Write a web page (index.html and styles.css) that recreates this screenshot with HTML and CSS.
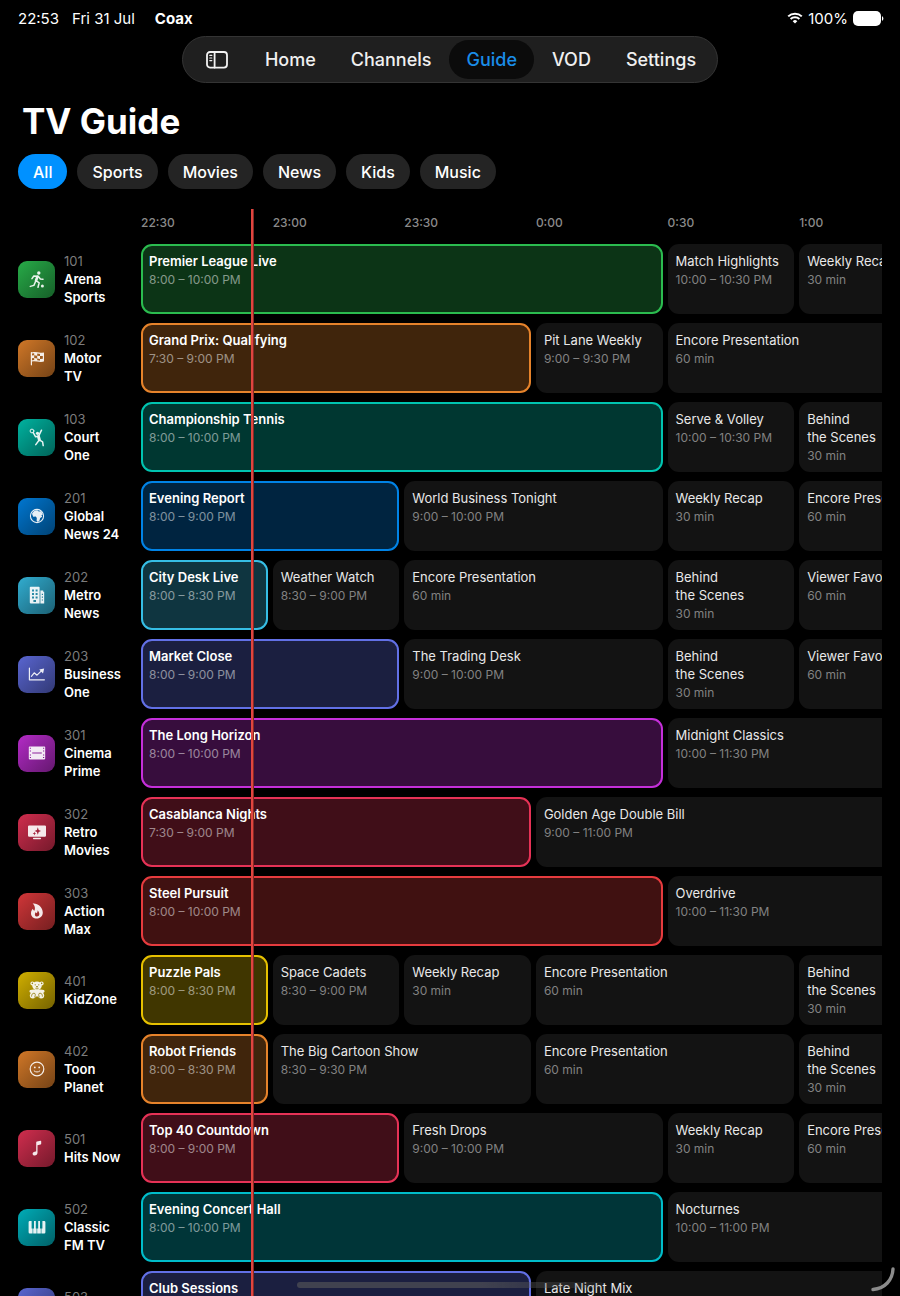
FILE: index.html
```html
<!DOCTYPE html>
<html lang="en">
<head>
    <meta charset="UTF-8">
    <meta name="viewport" content="width=device-width, initial-scale=1.0">
    <title>TV Guide</title>
    <link rel="stylesheet" href="styles.css">
</head>
<body>
    <div class="status-bar">
        <span>22:53</span>
        <span>Fri 31 Jul</span>
        <strong>Coax</strong>
        <div class="status-right">
            <svg class="wifi" viewBox="0 0 16 12" aria-hidden="true">
                <path d="M1.2 4.4a9.8 9.8 0 0 1 13.6 0M3.6 7a6.4 6.4 0 0 1 8.8 0" fill="none" stroke="#fff" stroke-width="2"/>
                <path d="M8 11.6 5.7 9.2a3.3 3.3 0 0 1 4.6 0z" fill="#fff"/>
            </svg>
            <span>100%</span>
            <svg class="battery" viewBox="0 0 31 15" aria-hidden="true">
                <rect width="28" height="15" rx="5" fill="#fff"/>
                <path d="M29 5.2c1.8.6 1.8 4 0 4.6z" fill="#fff"/>
            </svg>
        </div>
    </div>

    <nav class="tabs">
        <button class="sidebar-toggle" aria-label="Show sidebar">
            <svg viewBox="0 0 24 20" fill="none" stroke="#f2f2f2" stroke-width="1.8" stroke-linecap="round">
                <rect x="2" y="2" width="20" height="15.6" rx="3"/>
                <path d="M9.6 2v15.6"/>
                <path d="M4.8 5.4h2M4.8 8h2M4.8 10.6h2" stroke-width="1.2"/>
            </svg>
        </button>
        <a href="#">Home</a>
        <a href="#">Channels</a>
        <a href="#" class="active" aria-current="page">Guide</a>
        <a href="#">VOD</a>
        <a href="#">Settings</a>
    </nav>

    <h1>TV Guide</h1>

    <div class="filters">
        <button class="active">All</button>
        <button>Sports</button>
        <button>Movies</button>
        <button>News</button>
        <button>Kids</button>
        <button>Music</button>
    </div>

    <main class="guide">
        <div class="row times">
            <div class="channel"></div>
            <div class="slots">
                <time>22:30</time>
                <time>23:00</time>
                <time>23:30</time>
                <time>0:00</time>
                <time>0:30</time>
                <time>1:00</time>
            </div>
        </div>

        <div class="row green">
            <div class="channel">
                <div class="logo">
                    <svg viewBox="0 0 20 20" class="line">
                        <circle class="fill" cx="11.8" cy="4" r="1.7"/>
                        <path d="M5 9.6 6.8 7l4.4.2 2.2 2.8 2.6.2M10.6 7.6 8.8 12l-1.9 4.4-3.6 1M9 11.6l3.2 2.2-1.2 4.4"/>
                        <path d="M10.4 7.8 9 11.6" stroke-width="2.6"/>
                        <circle class="fill" cx="15.4" cy="17" r="1.5"/>
                    </svg>
                </div>
                <p><span>101</span>Arena<br>Sports</p>
            </div>
            <div class="slots">
                <button class="show span-4 live"><b>Premier League Live</b><small>8:00 – 10:00 PM</small></button>
                <button class="show"><b>Match Highlights</b><small>10:00 – 10:30 PM</small></button>
                <button class="show"><b>Weekly Recap</b><small>30 min</small></button>
            </div>
        </div>

        <div class="row orange">
            <div class="channel">
                <div class="logo">
                    <svg viewBox="0 0 20 20" class="line">
                        <path d="M4.4 4.6v12.2M4.4 5c4-1.4 7 1.2 12 0v8c-5 1.2-8-1.4-12 0" stroke-width="1.2"/>
                        <path class="fill" d="M7.2 4.4l3 .5v2.8l-3-.5zM13 5.3l3.2-.2v2.8l-3.2.2zM4.6 7.4l2.6-.2V10l-2.6.2zM10.2 7.7l2.8.4v2.8l-2.8-.4zM7.2 10l3 .5v2.6l-3-.5zM13 10.9l3.2-.2v2.6l-3.2.2z"/>
                    </svg>
                </div>
                <p><span>102</span>Motor<br>TV</p>
            </div>
            <div class="slots">
                <button class="show span-3 live"><b>Grand Prix: Qualifying</b><small>7:30 – 9:00 PM</small></button>
                <button class="show"><b>Pit Lane Weekly</b><small>9:00 – 9:30 PM</small></button>
                <button class="show span-2"><b>Encore Presentation</b><small>60 min</small></button>
            </div>
        </div>

        <div class="row mint">
            <div class="channel">
                <div class="logo">
                    <svg viewBox="0 0 20 20" class="line">
                        <circle cx="5" cy="4" r="1.9" stroke-width="1"/>
                        <path d="M6.2 5.6l2.4 4.2 3-.6 2.9-6M12.2 13l-3.4 4.6M12.4 12.8l3.2 2 .6 3.8"/>
                        <path d="M11.4 9.4l1 3.4" stroke-width="3"/>
                        <circle class="fill" cx="10.5" cy="6.3" r="1.6"/>
                    </svg>
                </div>
                <p><span>103</span>Court<br>One</p>
            </div>
            <div class="slots">
                <button class="show span-4 live"><b>Championship Tennis</b><small>8:00 – 10:00 PM</small></button>
                <button class="show"><b>Serve &amp; Volley</b><small>10:00 – 10:30 PM</small></button>
                <button class="show"><b>Behind<br>the Scenes</b><small>30 min</small></button>
            </div>
        </div>

        <div class="row blue">
            <div class="channel">
                <div class="logo">
                    <svg viewBox="0 0 20 20" class="line">
                        <circle cx="10" cy="10" r="6.6" stroke-width="1.1"/>
                        <path class="fill" d="M5 7.8C6 5.6 8 4 10.4 4.3l1.4 1.2 2.4-.2 1.6 3.2-1.4.8.8 1.4-2 1.4-.8 2.6-1.6 1.4-1.2-1.4.2-2.6-1-1.6-2.6.2z"/>
                    </svg>
                </div>
                <p><span>201</span>Global<br>News 24</p>
            </div>
            <div class="slots">
                <button class="show span-2 live"><b>Evening Report</b><small>8:00 – 9:00 PM</small></button>
                <button class="show span-2"><b>World Business Tonight</b><small>9:00 – 10:00 PM</small></button>
                <button class="show"><b>Weekly Recap</b><small>30 min</small></button>
                <button class="show span-2"><b>Encore Presentation</b><small>60 min</small></button>
            </div>
        </div>

        <div class="row cyan">
            <div class="channel">
                <div class="logo">
                    <svg viewBox="0 0 20 20">
                        <path fill-rule="evenodd" d="M3.6 1.8h8.2a.8.8 0 0 1 .8.8V18.4H3.6a.8.8 0 0 1-.8-.8V2.6a.8.8 0 0 1 .8-.8zM5 4.4v2h2v-2zM8.6 4.4v2h2v-2zM5 8v2h2V8zM8.6 8v2h2V8zM5 11.6v2h2v-2zM8.6 11.6v2h2v-2zM6.4 15v2h2.6v-2z"/>
                        <path fill-rule="evenodd" d="M13.4 5.6h2.8v1.2h1v11.6h-3.8zM14.8 8.8v1.2H16V8.8zM14.8 11.6v1.2H16v-1.2zM14.8 14.4v1.2H16v-1.2z"/>
                    </svg>
                </div>
                <p><span>202</span>Metro<br>News</p>
            </div>
            <div class="slots">
                <button class="show live"><b>City Desk Live</b><small>8:00 – 8:30 PM</small></button>
                <button class="show"><b>Weather Watch</b><small>8:30 – 9:00 PM</small></button>
                <button class="show span-2"><b>Encore Presentation</b><small>60 min</small></button>
                <button class="show"><b>Behind<br>the Scenes</b><small>30 min</small></button>
                <button class="show span-2"><b>Viewer Favorites</b><small>60 min</small></button>
            </div>
        </div>

        <div class="row indigo">
            <div class="channel">
                <div class="logo">
                    <svg viewBox="0 0 20 20" class="line">
                        <path d="M2.4 4v11.8h15M4.4 12.4l2.8-3.6L10 11.2l4.4-4.4" stroke-width="1.2"/>
                        <path class="fill" d="M12.2 5.4l5-.8-1.2 4.8z"/>
                    </svg>
                </div>
                <p><span>203</span>Business<br>One</p>
            </div>
            <div class="slots">
                <button class="show span-2 live"><b>Market Close</b><small>8:00 – 9:00 PM</small></button>
                <button class="show span-2"><b>The Trading Desk</b><small>9:00 – 10:00 PM</small></button>
                <button class="show"><b>Behind<br>the Scenes</b><small>30 min</small></button>
                <button class="show span-2"><b>Viewer Favorites</b><small>60 min</small></button>
            </div>
        </div>

        <div class="row purple">
            <div class="channel">
                <div class="logo">
                    <svg viewBox="0 0 20 20">
                        <path fill-rule="evenodd" d="M2.6 3.4h14.8a.8.8 0 0 1 .8.8v11.4a.8.8 0 0 1-.8.8H2.6a.8.8 0 0 1-.8-.8V4.2a.8.8 0 0 1 .8-.8zM2.8 4.8v1h1.2v-1zM2.8 7.4v1h1.2v-1zM2.8 11.4v1h1.2v-1zM2.8 14v1h1.2v-1zM16 4.8v1h1.2v-1zM16 7.4v1h1.2v-1zM16 11.4v1h1.2v-1zM16 14v1h1.2v-1zM5.2 9.4v1h9.6v-1z"/>
                    </svg>
                </div>
                <p><span>301</span>Cinema<br>Prime</p>
            </div>
            <div class="slots">
                <button class="show span-4 live"><b>The Long Horizon</b><small>8:00 – 10:00 PM</small></button>
                <button class="show span-3"><b>Midnight Classics</b><small>10:00 – 11:30 PM</small></button>
            </div>
        </div>

        <div class="row pink">
            <div class="channel">
                <div class="logo">
                    <svg viewBox="0 0 20 20">
                        <path fill-rule="evenodd" d="M2.2 3.4h15.6A1.2 1.2 0 0 1 19 4.6v9a1.2 1.2 0 0 1-1.2 1.2H2.2A1.2 1.2 0 0 1 1 13.6v-9a1.2 1.2 0 0 1 1.2-1.2zM10.8 5.2l-.9 2.9-2.3.9 2.3.9.9 2.9.9-2.9L14 9l-2.3-.9zM7.4 9.8l-.5 1.3-1.3.5 1.3.5.5 1.3.5-1.3 1.3-.5-1.3-.5z"/>
                        <rect x="6" y="15.8" width="8" height="1.4" rx=".6"/>
                    </svg>
                </div>
                <p><span>302</span>Retro<br>Movies</p>
            </div>
            <div class="slots">
                <button class="show span-3 live"><b>Casablanca Nights</b><small>7:30 – 9:00 PM</small></button>
                <button class="show span-4"><b>Golden Age Double Bill</b><small>9:00 – 11:00 PM</small></button>
            </div>
        </div>

        <div class="row red">
            <div class="channel">
                <div class="logo">
                    <svg viewBox="0 0 20 20">
                        <path fill-rule="evenodd" d="M5.6 2.6c4.6-.8 10.2 3.4 10.2 9 0 3.6-2.6 6-6 6S4 15.4 4 12.2c0-2 .8-3.2 1.8-4.4.4 1 .8 1.6 1.6 2 1-2.4.6-5.2-1.8-7.2zM10.6 9.2c.2 1.6-.4 2.2-.9 3-.5-.3-.7-.7-.8-1.2-1.6 1.6-1.4 4.6 1.1 4.6 2.8 0 3.2-3.6.6-6.4z"/>
                    </svg>
                </div>
                <p><span>303</span>Action<br>Max</p>
            </div>
            <div class="slots">
                <button class="show span-4 live"><b>Steel Pursuit</b><small>8:00 – 10:00 PM</small></button>
                <button class="show span-3"><b>Overdrive</b><small>10:00 – 11:30 PM</small></button>
            </div>
        </div>

        <div class="row yellow">
            <div class="channel">
                <div class="logo">
                    <svg viewBox="0 0 20 20">
                        <circle cx="5.4" cy="3.4" r="2"/>
                        <circle cx="14.6" cy="3.4" r="2"/>
                        <circle class="hole" cx="5.4" cy="3.4" r=".8"/>
                        <circle class="hole" cx="14.6" cy="3.4" r=".8"/>
                        <ellipse cx="10" cy="5.8" rx="4.8" ry="4.2"/>
                        <path d="M6.4 9.4h7.2l3.2.6a1.4 1.4 0 0 1 .2 2.4l-2.4 1v3H5.4v-3l-2.4-1a1.4 1.4 0 0 1 .2-2.4z"/>
                        <circle cx="5.8" cy="15.6" r="3"/>
                        <circle cx="14.2" cy="15.6" r="3"/>
                        <path class="hole-line" d="M4.6 16.6c-.2-2 .8-3.4 2.4-3.4s1.6 2 .6 4.2M15.4 16.6c.2-2-.8-3.4-2.4-3.4s-1.6 2-.6 4.2M8.4 8.2c1 .8 2.2.8 3.2 0"/>
                        <circle class="hole" cx="8.2" cy="4.8" r=".6"/>
                        <circle class="hole" cx="11.8" cy="4.8" r=".6"/>
                        <ellipse class="hole" cx="10" cy="6.7" rx="1" ry=".7"/>
                    </svg>
                </div>
                <p><span>401</span>KidZone</p>
            </div>
            <div class="slots">
                <button class="show live"><b>Puzzle Pals</b><small>8:00 – 8:30 PM</small></button>
                <button class="show"><b>Space Cadets</b><small>8:30 – 9:00 PM</small></button>
                <button class="show"><b>Weekly Recap</b><small>30 min</small></button>
                <button class="show span-2"><b>Encore Presentation</b><small>60 min</small></button>
                <button class="show"><b>Behind<br>the Scenes</b><small>30 min</small></button>
            </div>
        </div>

        <div class="row orange">
            <div class="channel">
                <div class="logo">
                    <svg viewBox="0 0 20 20" class="line">
                        <circle cx="10" cy="10" r="6.8" stroke-width="1.2"/>
                        <circle class="fill" cx="7.8" cy="8.4" r=".9"/>
                        <circle class="fill" cx="12.2" cy="8.4" r=".9"/>
                        <path d="M7.2 12c1.6 1.4 4 1.4 5.6 0" stroke-width="1"/>
                    </svg>
                </div>
                <p><span>402</span>Toon<br>Planet</p>
            </div>
            <div class="slots">
                <button class="show live"><b>Robot Friends</b><small>8:00 – 8:30 PM</small></button>
                <button class="show span-2"><b>The Big Cartoon Show</b><small>8:30 – 9:30 PM</small></button>
                <button class="show span-2"><b>Encore Presentation</b><small>60 min</small></button>
                <button class="show"><b>Behind<br>the Scenes</b><small>30 min</small></button>
            </div>
        </div>

        <div class="row pink">
            <div class="channel">
                <div class="logo">
                    <svg viewBox="0 0 20 20">
                        <path d="M9.2 4.4c0-.5.3-.8.8-.9l3.4-.8c.5-.1.8.1.8.6v2.5c0 .4-.2.7-.7.8l-3 .7v7.5c0 1.6-1.2 2.8-2.9 2.8-1.2 0-2-.7-2-1.8 0-1.2.9-1.8 2-2l1-.2c.4-.1.6-.3.6-.7z"/>
                    </svg>
                </div>
                <p><span>501</span>Hits Now</p>
            </div>
            <div class="slots">
                <button class="show span-2 live"><b>Top 40 Countdown</b><small>8:00 – 9:00 PM</small></button>
                <button class="show span-2"><b>Fresh Drops</b><small>9:00 – 10:00 PM</small></button>
                <button class="show"><b>Weekly Recap</b><small>30 min</small></button>
                <button class="show span-2"><b>Encore Presentation</b><small>60 min</small></button>
            </div>
        </div>

        <div class="row teal">
            <div class="channel">
                <div class="logo">
                    <svg viewBox="0 0 20 20">
                        <path d="M2.8 4h1.8v7.6h1v4.8H2.8a1.2 1.2 0 0 1-1.2-1.2v-10A1.2 1.2 0 0 1 2.8 4zM7 4h1.8v7.6h.8v4.8H6.2v-4.8H7zM11.2 4H13v7.6h.8v4.8h-3.6v-4.8h1zM15.4 4h1.8a1.2 1.2 0 0 1 1.2 1.2v10a1.2 1.2 0 0 1-1.2 1.2h-2.8v-4.8h1z"/>
                    </svg>
                </div>
                <p><span>502</span>Classic<br>FM TV</p>
            </div>
            <div class="slots">
                <button class="show span-4 live"><b>Evening Concert Hall</b><small>8:00 – 10:00 PM</small></button>
                <button class="show span-2"><b>Nocturnes</b><small>10:00 – 11:00 PM</small></button>
            </div>
        </div>

        <div class="row indigo">
            <div class="channel">
                <div class="logo"></div>
                <p><span>503</span>Pulse</p>
            </div>
            <div class="slots">
                <button class="show span-3 live"><b>Club Sessions</b><small>7:30 – 9:00 PM</small></button>
                <button class="show span-3"><b>Late Night Mix</b><small>9:00 – 10:30 PM</small></button>
            </div>
        </div>

        <div class="now-line"></div>
    </main>

    <div class="home-indicator"></div>
    <svg class="corner" viewBox="0 0 28 28" aria-hidden="true">
        <path d="M24 3C23.5 14 16 22.5 4 23.5" fill="none" stroke="#8c8c8c" stroke-width="3.4" stroke-linecap="round"/>
    </svg>
</body>
</html>
```
FILE: styles.css
```css
* {
    margin: 0;
    padding: 0;
    box-sizing: border-box;
}

body {
    height: 100vh;
    padding: 0 18px;
    display: flex;
    flex-direction: column;
    overflow: hidden;
    background-color: #000;
    color: #fff;
    font-family: Inter, "Liberation Sans", sans-serif;
}

button {
    border: none;
    color: inherit;
    font: inherit;
    cursor: pointer;
}

/* Status bar */
.status-bar {
    height: 36px;
    margin-right: -2px;
    display: flex;
    align-items: center;
    gap: 13px;
    font-size: 15px;
}

.status-bar strong {
    margin-left: 7px;
    font-weight: 700;
}

.status-right {
    margin-left: auto;
    display: flex;
    align-items: center;
    gap: 5px;
}

.wifi {
    width: 16px;
    height: 12px;
}

.battery {
    width: 31px;
    height: 15px;
}

/* Top tabs */
.tabs {
    align-self: center;
    height: 47px;
    padding: 3px 4px;
    display: flex;
    gap: 1px;
    border: 1px solid #343434;
    border-radius: 24px;
    background-color: #1f1f1f;
}

.tabs a {
    padding: 0 17px;
    border-radius: 20px;
    color: #f0f0f0;
    font-size: 18px;
    font-weight: 500;
    line-height: 39px;
    text-decoration: none;
}

.tabs a.active {
    background-color: #0b0b0b;
    color: #1a8de8;
}

.sidebar-toggle {
    padding: 0 18px;
    background: none;
}

.sidebar-toggle svg {
    display: block;
    width: 24px;
    height: 20px;
}

h1 {
    margin: 16px 0 11px 4px;
    font-size: 35px;
    font-weight: 700;
    line-height: 44px;
}

/* Category filters */
.filters {
    display: flex;
    gap: 10px;
}

.filters button {
    height: 35px;
    padding: 0 15px;
    border-radius: 18px;
    background-color: #242424;
    font-size: 16px;
    font-weight: 500;
}

.filters button.active {
    background-color: #0091ff;
}

/* Guide */
.guide {
    position: relative;
    flex: 1;
    min-height: 0;
    margin-top: 20px;
    overflow: hidden;
}

.row {
    height: 70px;
    margin-bottom: 9px;
    display: flex;
}

.row.times {
    height: 26px;
    align-items: center;
}

.channel {
    flex: 0 0 123px;
    display: flex;
    align-items: center;
    gap: 9px;
}

.channel p {
    font-size: 13px;
    font-weight: 600;
    line-height: 18px;
}

.channel span {
    display: block;
    color: #7c7c7c;
    font-weight: 400;
}

.logo {
    width: 37px;
    height: 37px;
    display: flex;
    align-items: center;
    justify-content: center;
    border-radius: 9px;
    background: linear-gradient(135deg, color-mix(in srgb, var(--accent) 82%, #000), color-mix(in srgb, var(--accent) 46%, #000));
}

.logo svg {
    width: 20px;
    height: 20px;
    fill: #fff;
    opacity: 0.9;
}

.logo .line {
    fill: none;
    stroke: #fff;
    stroke-width: 1.5;
    stroke-linecap: round;
    stroke-linejoin: round;
}

.logo .fill {
    fill: #fff;
    stroke: none;
}

.logo .hole {
    fill: #8d7805;
}

.logo .hole-line {
    fill: none;
    stroke: #8d7805;
    stroke-width: 0.8;
}

/* Eight half hour slots, the last ones run off the right edge */
.slots {
    flex: 0 0 1048px;
    display: grid;
    grid-template-columns: repeat(8, 1fr);
    gap: 5px;
}

.slots time {
    color: #8a8a8a;
    font-size: 12px;
    font-weight: 500;
}

.show {
    padding: 8px 8px 0;
    display: flex;
    flex-direction: column;
    border-radius: 11px;
    background-color: #131313;
    text-align: left;
    white-space: nowrap;
    line-height: 18px;
}

.show b {
    color: #e8e8e8;
    font-size: 13px;
    font-weight: 400;
}

.show small {
    color: #828282;
    font-size: 12px;
    line-height: 20px;
}

.show.live {
    padding: 6px 6px 0;
    border: 2px solid color-mix(in srgb, var(--accent) 90%, #000);
    background-color: color-mix(in srgb, var(--accent) 25%, #000);
}

.show.live b {
    color: #fff;
    font-weight: 600;
}

.show.live small {
    color: rgba(255, 255, 255, 0.5);
}

.span-2 { grid-column: span 2; }
.span-3 { grid-column: span 3; }
.span-4 { grid-column: span 4; }

.green { --accent: #30d158; }
.orange { --accent: #ff9230; }
.mint { --accent: #00dac3; }
.blue { --accent: #0091ff; }
.cyan { --accent: #3cd3fe; }
.indigo { --accent: #6d7cff; }
.purple { --accent: #db34f2; }
.pink { --accent: #ff375f; }
.red { --accent: #ff4245; }
.yellow { --accent: #ffd600; }
.teal { --accent: #00d2e0; }

.now-line {
    position: absolute;
    top: 0;
    bottom: 0;
    left: 233px;
    width: 3px;
    background-color: #e0453f;
    border-right: 1px solid rgba(0, 0, 0, 0.4);
}

.home-indicator {
    position: fixed;
    bottom: 8px;
    left: 33%;
    width: 34%;
    height: 6px;
    border-radius: 3px;
    background: linear-gradient(90deg, rgba(90, 90, 90, 0.6) 60%, rgba(90, 90, 90, 0.15));
}

.corner {
    position: fixed;
    right: 3px;
    bottom: 2px;
    width: 28px;
    height: 28px;
}
```
